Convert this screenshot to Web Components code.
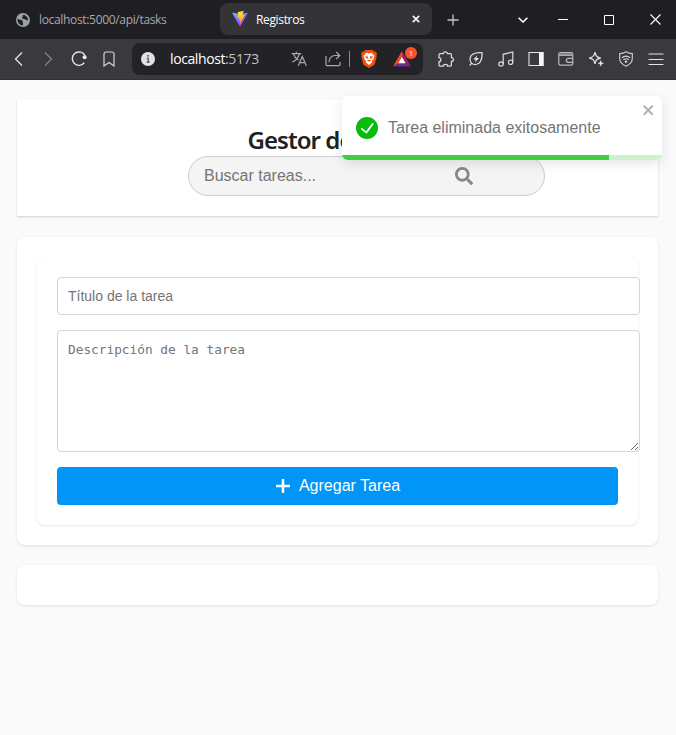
<!DOCTYPE html>
<html lang="es">
<head>
<meta charset="utf-8">
<title>Registros</title>
<style>
html,body{margin:0;height:100%;background:#fafafa;overflow:hidden}
body{font-family:"Liberation Sans",Arial,sans-serif;color:#222}
</style>
</head>
<body>
<browser-window>
  <browser-tabs slot="tabs"></browser-tabs>
  <browser-toolbar slot="toolbar"></browser-toolbar>
  <task-page></task-page>
</browser-window>
<script>
const define = (name, html) => {
  const t = document.createElement('template');
  t.innerHTML = html;
  customElements.define(name, class extends HTMLElement {
    constructor() {
      super();
      this.attachShadow({mode: 'open'}).appendChild(t.content.cloneNode(true));
    }
  });
};

const icons = {
  globe: ['0 0 14 14', 14, '<circle cx="7" cy="7" r="7" fill="#9aa0a6"/><path d="M1.6 5.6c1.6 1.9 3.6.8 4.8 2 .9.9-.2 1.8.6 3 .5.8-.2 1.6-.8 1.8C3.400 12 1.200 9.600 1.600 5.600ZM7 2c-.6 1 .3 1.700-.7 2.400-.6.500-.2 1.500 1.100 1.300 1.300-.2 1.900 1.600 4.700 1.500C12 4.500 10 2 7 2Z" fill="#202023"/>'],
  vite: ['0 0 410 404', 16, '<defs><linearGradient id="a" x1="6" y1="33" x2="235" y2="344" gradientUnits="userSpaceOnUse"><stop stop-color="#41D1FF"/><stop offset="1" stop-color="#BD34FE"/></linearGradient><linearGradient id="b" x1="194" y1="9" x2="236" y2="293" gradientUnits="userSpaceOnUse"><stop stop-color="#FFEA83"/><stop offset=".08" stop-color="#FFDD35"/><stop offset="1" stop-color="#FFA800"/></linearGradient></defs><path d="M399.600 59.500 215.600 388.500c-3.800 6.800-13.600 6.800-17.400.100L10.600 59.600c-4.200-7.300 2.100-16.200 10.400-14.700l184.200 32.900c1.200.200 2.400.200 3.500 0l180.400-32.900c8.200-1.500 14.600 7.300 10.500 14.600Z" fill="url(#a)"/><path d="m293 1.600-136.200 26.700c-2.200.400-3.900 2.300-4 4.600l-8.400 141.400c-.200 3.300 2.900 5.900 6.100 5.200l37.900-8.800c3.500-.800 6.700 2.300 6 5.900l-11.300 55.100c-.700 3.700 2.700 6.900 6.300 5.800l23.400-7.100c3.600-1.100 7.100 2.100 6.300 5.800l-17.900 86.600c-1.100 5.400 6.100 8.400 9.100 3.700l2-3.100L323.400 101.800c1.900-3.700-1.300-7.900-5.400-7.100l-39.100 7.500c-3.700.700-6.800-2.700-5.800-6.300l25.500-88.300c1-3.600-2-7-5.700-6.300Z" fill="url(#b)"/>'],
  close: ['0 0 8 8', 8, '<path d="m.8.8 6.400 6.400M7.200.8.8 7.200" stroke="#f4f4f4" stroke-width="1.700"/>'],
  plus: ['0 0 12 12', 12, '<path d="M6 .5v11M.5 6h11" stroke="#c6c6c9" stroke-width="1.300"/>'],
  down: ['0 0 10 6', 10, '<path d="m.6.700 4.400 4.300L9.400.700" stroke="#fff" stroke-width="1.600"/>'],
  min: ['0 0 10 10', 10, '<path d="M0 4.500h10" stroke="#fff"/>'],
  max: ['0 0 10 10', 10, '<path d="M.5.500h9v9h-9z" stroke="#fff"/>'],
  x: ['0 0 11 11', 11, '<path d="m.500.500 10 10m0-10-10 10" stroke="#fff" stroke-width="1.100"/>'],
  back: ['0 0 16 16', 16, '<path d="M11 1.500 4.500 8l6.500 6.500" stroke="#e4e4e7" stroke-width="1.300"/>'],
  fwd: ['0 0 16 16', 16, '<path d="M4 1.500 10.500 8 4 14.500" stroke="#818187" stroke-width="1.300"/>'],
  reload: ['0 0 16 16', 16, '<path d="M13.300 11.800A6.700 6.700 0 1 1 14 4.600" stroke="#e6e6e9" stroke-width="1.400"/><circle cx="13.600" cy="6.300" r="2" fill="#eee"/>'],
  mark: ['0 0 16 16', 16, '<path d="M3 3a2 2 0 0 1 2-2h6a2 2 0 0 1 2 2v12l-5-3.500L3 15Z" stroke="#d4d4d8" stroke-width="1.200"/>'],
  info: ['0 0 14 14', 14, '<circle cx="7" cy="7" r="7" fill="#e2e2e6"/><path d="M5.700 6.300H7.200V10M5.700 10.100h2.900" stroke="#414146" stroke-width="1.100"/><circle cx="7" cy="3.800" r=".9" fill="#414146"/>'],
  lang: ['0 0 16 16', 16, '<path d="M.700 2.700h9.500M5.300.700v2M8.300 2.800C7.500 6.300 5 9.500 1.200 11M2.600 3.300c.8 2.600 2.700 4.700 4.900 5.900M7.300 14.700 11.300 5.500l4 9.200M8.600 11.700H14" stroke="#a9a9ae" stroke-width="1.200"/>'],
  share: ['0 0 16 16', 16, '<path d="M1 5v8.500a1.200 1.200 0 0 0 1.200 1.200h11.600a1.200 1.200 0 0 0 1.200-1.200V11M4 11.200c0-4 2.600-6.700 6-6.700h4.600M11.200 1l3.600 3.500L11.200 8" stroke="#a9a9ae" stroke-width="1.200"/>'],
  brave: ['0 0 16 18', 16, '<path d="M4.300 0h7.400l1.500 1.700 1.700-.2L16 4.200l-.6 1.700.3 1.200-2.200 7.700L8 18l-5.500-3.200L.3 7.100l.3-1.200L0 4.200l1.100-2.700 1.700.2Z" fill="#f4500b"/><path d="m5.300 2.800 2.700.6 2.700-.6L13.600 6l-.9 1.500.2 1.100-2 2.500.3 1.200L8 15l-3.200-2.700.3-1.200-2-2.500.2-1.100L2.400 6Z" fill="#fff"/><path d="m3.800 6.200 3 .4.500 2.200L5.500 8.400Zm8.400 0-3 .4-.5 2.200 1.800-.4ZM5.700 10.400 8 9.800l2.300.6L8 11.800Z" fill="#f4500b"/>'],
  bat: ['0 0 18 16', 18, '<path d="M9 0 0 15.500l9-5Z" fill="#ff4724"/><path d="m9 0 9 15.500-9-5Z" fill="#9e1f63"/><path d="M0 15.500h18L9 10.200Z" fill="#662d91"/><path d="m9 6 3.600 6.200H5.400Z" fill="#fff"/>'],
  puzzle: ['0 0 16 16', 16, '<path d="M5.200 2.700c0-2.600 4.200-2.600 4.200 0h3c.6 0 1 .4 1 1v2.800c2.700 0 2.700 4.200 0 4.200V14c0 .6-.4 1-1 1H9.600c0-2.300-4.200-2.300-4.200 0H2c-.6 0-1-.4-1-1v-3.300c2.500 0 2.500-4 0-4v-3c0-.6.400-1 1-1Z" stroke="#dcdce0" stroke-width="1.250"/>'],
  leaf: ['0 0 16 16', 16, '<path d="M14.200 1.800C8 1.300 2.500 2.900 2 7.800c-.2 3.600 2.500 6 5.800 5.700 5.200-.5 6.400-6 6.400-11.700ZM3.700 12 1.700 14.500" stroke="#dcdce0" stroke-width="1.250"/><path d="M9.200 4.200 5.400 8.600h2.400L7 11.600l4-4.700H8.400Z" fill="#eee"/>'],
  music: ['0 0 16 16', 16, '<circle cx="3" cy="13" r="2.200" stroke="#dcdce0" stroke-width="1.200"/><circle cx="12.600" cy="11.200" r="2.200" stroke="#dcdce0" stroke-width="1.200"/><path d="M5.200 13V3.300L14.800 1v10" stroke="#dcdce0" stroke-width="1.200"/>'],
  side: ['0 0 16 16', 16, '<path d="M1 1.500h14v13H1Z" stroke="#e5e5e8" stroke-width="1.100"/><path d="M11 1h4.500v14H11Z" fill="#f4f4f6"/>'],
  wallet: ['0 0 16 16', 16, '<path d="M14.800 4.500V3.300c0-1-.7-1.600-1.700-1.600H2.300c-1 0-1.500.7-1.500 1.500v9.300c0 1 .7 1.700 1.700 1.700h10.600c1 0 1.700-.7 1.700-1.700V5.700c0-.8-.6-1.300-1.400-1.300H1.500M15 7.300h-4.700a2 2 0 0 0 0 4H15" stroke="#b8b8bd" stroke-width="1.200"/><path d="M1 2.300h13.500v2H1Z" fill="#8f8f94"/>'],
  spark: ['0 0 16 16', 16, '<path d="M7 1.200c.7 3.700 1.700 5 5.700 5.800-4 .8-5 2.100-5.700 5.800C6.300 9.100 5.200 7.800 1.300 7 5.200 6.200 6.300 4.900 7 1.200Z" stroke="#dcdce0" stroke-width="1.300"/><path d="M12.800 9.500c.2 1.800.8 2.500 2.700 2.800-1.900.3-2.500 1-2.700 2.800-.2-1.800-.8-2.500-2.700-2.800 1.900-.3 2.500-1 2.700-2.800Z" fill="#eee" stroke="#eee" stroke-width=".5"/>'],
  vpn: ['0 0 16 16', 16, '<path d="M8 .8c2.100 1.400 4 1.900 6.300 1.900v4.800c0 3.600-2.500 6-6.300 7.700-3.800-1.700-6.300-4.100-6.300-7.700V2.700C4 2.700 5.900 2.200 8 .8Z" stroke="#c8c8cd" stroke-width="1.200"/><path d="M4 6.700c2.600-2 5.400-2 8 0M5.400 8.700c1.800-1.300 3.400-1.300 5.200 0" stroke="#dedee2" stroke-width="1.200"/><circle cx="8" cy="10.600" r="1.200" fill="#dedee2"/>'],
  menu: ['0 0 16 16', 16, '<path d="M.5 3h15M.5 8.500h15M.5 13.500h15" stroke="#e6e6e9" stroke-width="1.200"/>'],
  search: ['0 0 512 512', 18, '<path fill="#888" d="M505 442.700 405.300 343c-4.500-4.500-10.600-7-17-7H372c27.600-35.300 44-79.700 44-128C416 93.100 322.900 0 208 0S0 93.100 0 208s93.100 208 208 208c48.300 0 92.700-16.400 128-44v16.300c0 6.400 2.500 12.500 7 17l99.700 99.700c9.400 9.400 24.600 9.400 33.900 0l28.300-28.300c9.400-9.400 9.400-24.600.1-34zM208 336c-70.700 0-128-57.200-128-128 0-70.700 57.200-128 128-128 70.700 0 128 57.200 128 128 0 70.700-57.200 128-128 128z"/>'],
  add: ['0 0 14 14', 14, '<path d="M7 .9v12.200M.9 7h12.200" stroke="#fff" stroke-width="2.600" stroke-linecap="round"/>'],
  check: ['0 0 24 24', 22, '<path fill="#07bc0c" d="M12 0a12 12 0 1 0 12 12A12.014 12.014 0 0 0 12 0Zm6.927 8.200-6.845 9.289a1.011 1.011 0 0 1-1.430.188l-4.888-3.908a1 1 0 1 1 1.250-1.562l4.076 3.261 6.227-8.451a1 1 0 1 1 1.610 1.183Z"/>'],
  dismiss: ['0 0 14 16', 14, '<path fill="#b2b2b2" fill-rule="evenodd" d="m7.710 8.230 3.750 3.750-1.480 1.480-3.750-3.750-3.750 3.750L1 11.980l3.750-3.750L1 4.480 2.480 3l3.750 3.750L9.980 3l1.480 1.480-3.750 3.750Z"/>'],
};
customElements.define('ui-icon', class extends HTMLElement {
  connectedCallback() {
    if (this.shadowRoot) return;
    const [box, w, body] = icons[this.getAttribute('name')];
    const [, , bw, bh] = box.split(' ').map(Number);
    this.attachShadow({mode: 'open'}).innerHTML =
      `<style>:host{display:block;flex:none}svg{display:block}</style><svg viewBox="${box}" width="${w}" height="${w * bh / bw}" fill="none">${body}</svg>`;
  }
});

define('browser-window', `<style>
:host{display:grid;grid-template:39px 41px 1fr / minmax(0,1fr);height:735px;width:676px}
</style><slot name="tabs"></slot><slot name="toolbar"></slot><slot></slot>`);

define('browser-tabs', `<style>
:host{display:flex;align-items:center;background:#1f1e23;font:12px "Open Sans","Noto Sans",sans-serif;color:#a9a9ac}
.idle{display:flex;flex:none;align-items:center;gap:9px;width:204px;padding-left:16px}
.idle span{letter-spacing:-.33px}
.on{display:flex;flex:none;align-items:center;box-sizing:border-box;width:212px;height:32px;margin-top:-1px;border-radius:8px;background:#343338;color:#fff;padding:0 12px}
.on span{flex:1;margin-left:8px;letter-spacing:-.35px}
.c{display:grid;flex:none;place-items:center;width:46px}
</style>
<div class="idle"><ui-icon name="globe"></ui-icon><span>localhost:5000/api/tasks</span></div>
<div class="on"><ui-icon name="vite"></ui-icon><span>Registros</span><ui-icon name="close"></ui-icon></div>
<div class="c" style="width:42px"><ui-icon name="plus"></ui-icon></div>
<div class="c" style="margin-left:26px"><ui-icon name="down"></ui-icon></div>
<div class="c" style="width:34px"><ui-icon name="min"></ui-icon></div>
<div class="c" style="margin-left:6px"><ui-icon name="max"></ui-icon></div>
<div class="c"><ui-icon name="x"></ui-icon></div>`);

define('browser-toolbar', `<style>
:host{display:flex;align-items:center;box-sizing:border-box;padding:0 0 1px 4px;background:#3a393e;border-bottom:1px solid #313036}
.c{display:grid;place-items:center;width:30px;flex:none}
address-bar{margin:0 8px}
</style>
<div class="c"><ui-icon name="back"></ui-icon></div><div class="c"><ui-icon name="fwd"></ui-icon></div><div class="c"><ui-icon name="reload"></ui-icon></div><div class="c"><ui-icon name="mark"></ui-icon></div>
<address-bar></address-bar>
<div class="c"><ui-icon name="puzzle"></ui-icon></div><div class="c"><ui-icon name="leaf"></ui-icon></div><div class="c"><ui-icon name="music"></ui-icon></div><div class="c"><ui-icon name="side"></ui-icon></div><div class="c"><ui-icon name="wallet"></ui-icon></div><div class="c"><ui-icon name="spark"></ui-icon></div><div class="c"><ui-icon name="vpn"></ui-icon></div><div class="c"><ui-icon name="menu"></ui-icon></div>`);

define('address-bar', `<style>
:host{display:flex;flex:none;align-items:center;box-sizing:border-box;width:291px;height:32px;border-radius:8px;background:#232227;padding-left:9px;font:14px "Open Sans","Noto Sans",sans-serif;color:#fff}
.url{margin-left:15px;width:121px;letter-spacing:-.4px;white-space:nowrap}
.url span{color:#bebec2}
.line{width:1px;height:16px;background:#8b8b90;margin:0 11px 0 8px}
.rewards{position:relative;margin-left:16px}
.badge{position:absolute;left:12px;top:-4px;width:12px;height:12px;border-radius:50%;background:#fb542b;color:#fff;font-size:8px;line-height:12px;text-align:center}
</style>
<ui-icon name="info"></ui-icon><div class="url">localhost<span>:5173</span></div>
<ui-icon name="lang"></ui-icon><ui-icon name="share" style="margin-left:18px"></ui-icon><div class="line"></div><ui-icon name="brave"></ui-icon>
<div class="rewards"><ui-icon name="bat"></ui-icon><div class="badge">1</div></div>`);

define('task-page', `<style>
:host{display:flex;flex-direction:column;gap:20px;position:relative;padding:19px 18px 0 17px;background:#fafafa}
header{display:flex;flex-direction:column;align-items:center;box-sizing:border-box;height:117px;margin-bottom:1px;padding-top:25px;background:#fff;box-shadow:0 1px 2px rgba(0,0,0,.17)}
h1{margin:0;width:180px;height:32px;font:600 24px/31px "Noto Sans","Open Sans",sans-serif;letter-spacing:-.95px;color:#212121;white-space:nowrap}
toast-message{position:absolute;left:342px;top:16px}
search-box{margin-left:58px}
</style>
<header><h1>Gestor de</h1><search-box></search-box></header>
<surface-card><task-form></task-form></surface-card>
<surface-card></surface-card>
<toast-message>Tarea eliminada exitosamente</toast-message>`);

define('search-box', `<style>
:host{display:flex;flex:none;align-items:center;box-sizing:border-box;width:357px;height:40px;border:1px solid #ccc;border-radius:20px;background:#f4f4f4;padding-left:15px}
input{box-sizing:border-box;width:251px;border:0;padding:0;background:none;outline:0;font:16px "Liberation Sans",Arial,sans-serif}
input::placeholder{color:#757575;opacity:1}
</style><input placeholder="Buscar tareas..."><ui-icon name="search"></ui-icon>`);

define('surface-card', `<style>
:host{display:block;padding:20px;border-radius:8px;background:#fff;box-shadow:0 1px 3px rgba(0,0,0,.1)}
</style><slot></slot>`);

define('task-form', `<style>
:host{display:flex;flex-direction:column;gap:15px;box-sizing:border-box;height:268px;padding:20px;border-radius:8px;background:#fff;box-shadow:0 1px 3px rgba(0,0,0,.1)}
input,textarea{display:block;box-sizing:border-box;width:583px;margin:0;border:1px solid #d5d5d5;border-radius:4px;padding:10px;background:#fff;outline:0}
input{height:38px;font:14px "Liberation Sans",Arial,sans-serif}
textarea{height:122px;font:12.800px/18px "DejaVu Sans Mono",monospace;letter-spacing:-.01px;resize:vertical}
::placeholder{color:#757575;opacity:1}
button{display:flex;align-items:center;justify-content:center;gap:9px;height:38px;border:0;border-radius:4px;padding:0 0 0 1px;background:#0095f6;color:#fff;font:16px "Liberation Sans",Arial,sans-serif}
</style><input placeholder="Título de la tarea"><textarea placeholder="Descripción de la tarea"></textarea>
<button><ui-icon name="add"></ui-icon>Agregar Tarea</button>`);

define('toast-message', `<style>
:host{display:flex;flex-direction:column;width:320px;height:64px;border-radius:6px;background:#fff;overflow:hidden;box-shadow:0 4px 12px rgba(0,0,0,.1);font-size:16px;color:#757575}
.row{display:flex;flex:1;padding-left:14px}
.icon{margin:21px 10px 0 0}
.text{flex:1;padding-top:22px;line-height:20px}
.x{margin:6px 6px 0 0}
.bar{height:5px;background:#cdf2ce}
.bar div{width:267px;height:5px;background:#40cd44}
</style><div class="row"><ui-icon class="icon" name="check"></ui-icon><div class="text"><slot></slot></div><ui-icon class="x" name="dismiss"></ui-icon></div><div class="bar"><div></div></div>`);
</script>
</body>
</html>
